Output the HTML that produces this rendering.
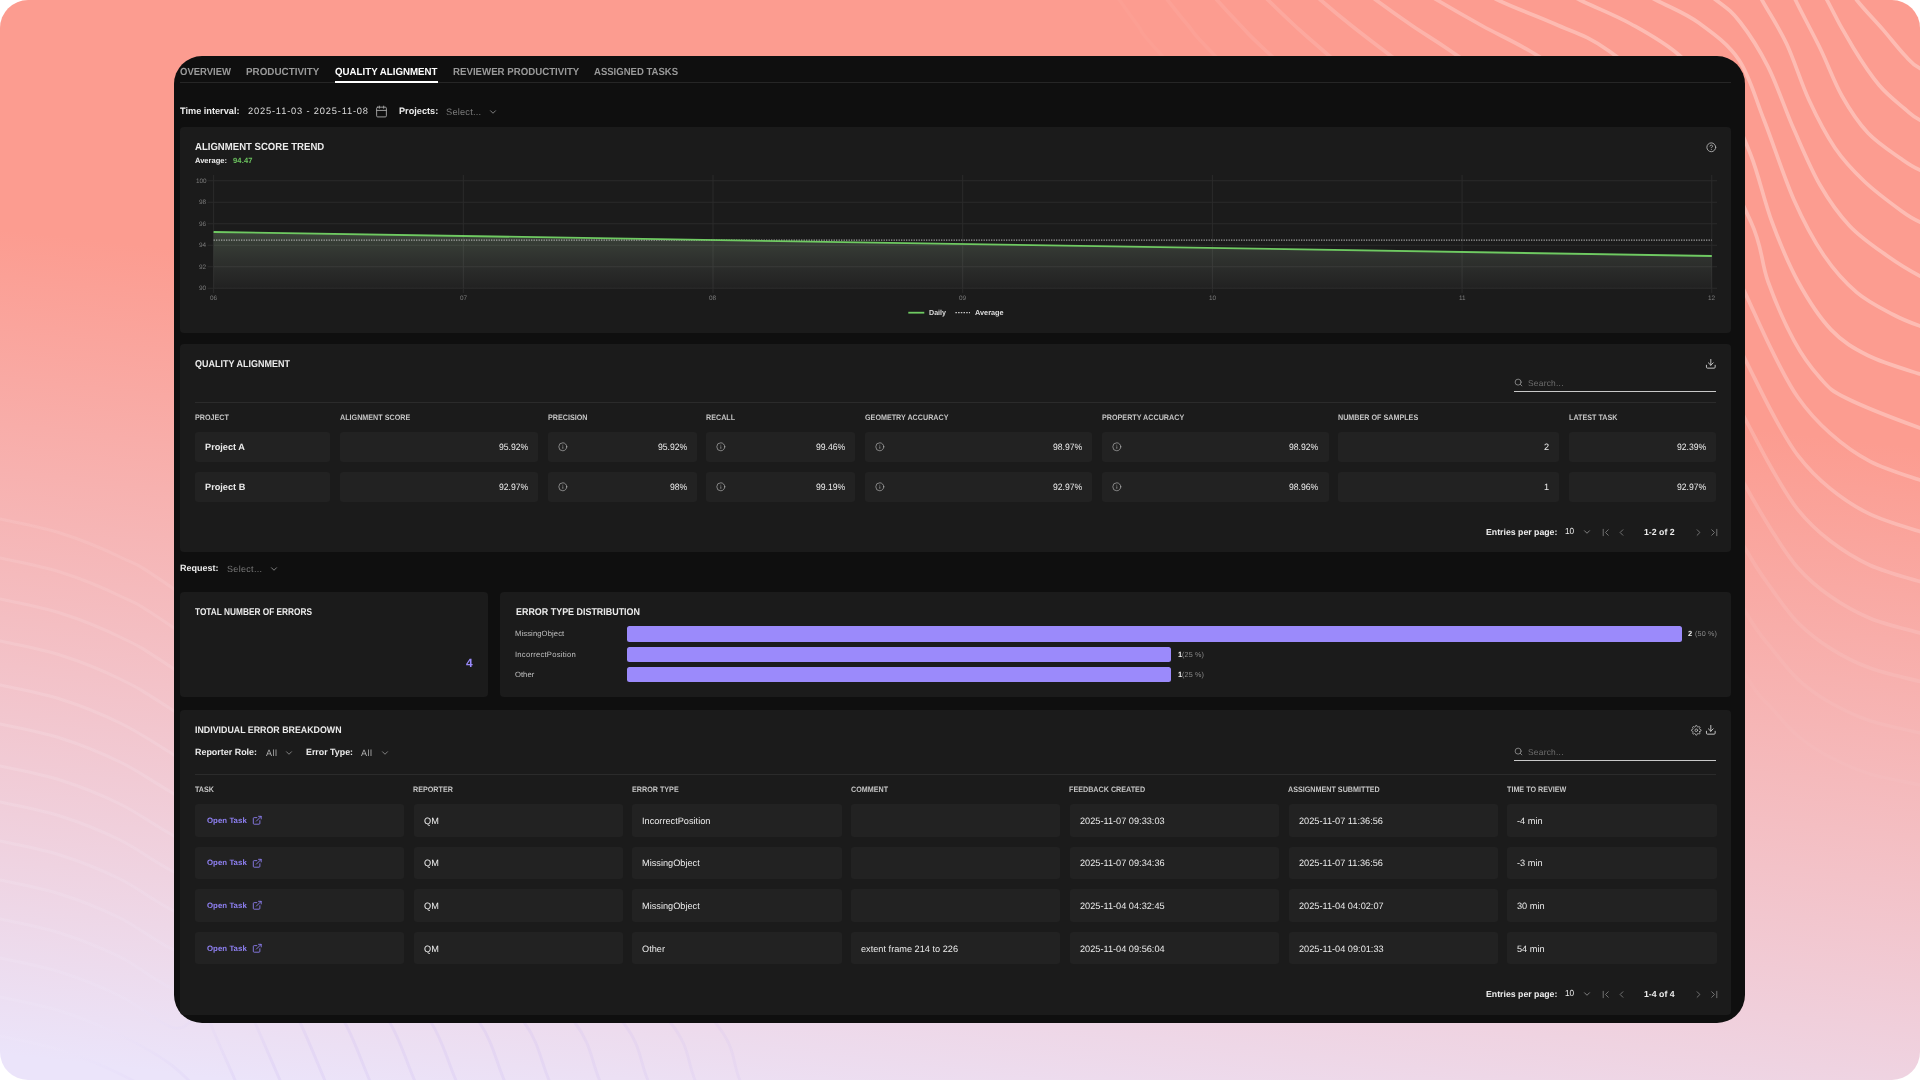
<!DOCTYPE html>
<html lang="en"><head><meta charset="utf-8"><title>Quality Alignment</title>
<style>
html,body{margin:0;padding:0;background:#fff;}
body{width:1920px;height:1080px;overflow:hidden;position:relative;font-family:"Liberation Sans", Arial, sans-serif;}
.r{position:absolute;}
.t{position:absolute;white-space:pre;line-height:20px;transform:skewX(0.06deg);transform-origin:0 50%;font-family:"Liberation Sans", Arial, sans-serif;}
svg{position:absolute;overflow:visible;}
#tx{position:absolute;left:0;top:0;width:1920px;height:1080px;will-change:transform;}

</style></head><body>
<div class="r" id="bg" style="left:0;top:0;width:1920px;height:1080px;border-radius:28px;overflow:hidden;background:linear-gradient(186.5deg,#fc9c90 34.5%,#ebe4fa 98%);">
<svg width="1920" height="1080" viewBox="0 0 1920 1080" style="left:0;top:0" fill="none" stroke="#ffffff" stroke-width="3.7">
<defs><linearGradient id="wl" gradientUnits="userSpaceOnUse" x1="0" y1="700" x2="250" y2="1080"><stop offset="0" stop-color="#ffffff" stop-opacity="0.6"/><stop offset="0.7" stop-color="#f0eafc" stop-opacity="0.6"/><stop offset="1" stop-color="#c9b6f1"/></linearGradient></defs><g><path d="M1836.0 -30.0C1839.5 -25.0 1848.9 -9.9 1856.7 0.0C1864.5 9.9 1875.0 20.4 1883.0 29.6C1891.0 38.9 1898.8 49.0 1905.0 55.5C1911.2 62.0 1912.5 64.4 1920.0 68.5C1927.5 72.6 1945.0 78.1 1950.0 80.0" stroke-opacity="0.32"/><path d="M1815.0 -30.0C1817.0 -25.0 1820.6 -13.0 1827.0 0.0C1833.4 13.0 1844.7 33.8 1853.4 48.0C1862.1 62.2 1870.4 74.8 1879.0 85.0C1887.6 95.2 1898.2 103.2 1905.0 109.0C1911.8 114.8 1912.5 116.5 1920.0 120.0C1927.5 123.5 1945.0 128.3 1950.0 130.0" stroke-opacity="0.32"/><path d="M1783.0 -30.0C1785.1 -25.0 1789.3 -13.0 1795.5 0.0C1801.7 13.0 1812.2 32.0 1820.0 48.0C1827.8 64.0 1834.0 81.8 1842.0 96.0C1850.0 110.2 1858.1 122.5 1868.0 133.0C1877.9 143.5 1892.8 152.8 1901.5 159.0C1910.2 165.2 1911.9 166.5 1920.0 170.0C1928.1 173.5 1945.0 178.3 1950.0 180.0" stroke-opacity="0.32"/><path d="M1745.0 -32.0C1747.8 -26.7 1755.0 -12.7 1762.0 0.0C1769.0 12.7 1778.9 27.3 1786.7 44.0C1794.5 60.7 1801.0 82.7 1809.0 100.0C1817.0 117.3 1825.8 134.4 1835.0 148.0C1844.2 161.6 1853.4 171.0 1864.5 181.5C1875.6 192.0 1892.2 204.2 1901.5 211.0C1910.8 217.8 1911.9 218.5 1920.0 222.0C1928.1 225.5 1945.0 230.3 1950.0 232.0" stroke-opacity="0.32"/><path d="M1670.0 -30.0C1677.7 -25.0 1704.3 -8.7 1716.0 0.0C1727.7 8.7 1731.3 10.9 1740.0 22.0C1748.7 33.1 1759.0 48.8 1768.0 66.7C1777.0 84.6 1785.3 109.9 1794.0 129.6C1802.7 149.3 1810.7 168.9 1820.0 185.0C1829.3 201.1 1838.6 214.2 1849.7 226.0C1860.8 237.8 1875.0 247.2 1886.7 255.5C1898.4 263.8 1909.5 270.6 1920.0 276.0C1930.5 281.4 1945.0 286.0 1950.0 288.0" stroke-opacity="0.32"/><path d="M1596.0 -30.0C1606.0 -25.0 1638.8 -8.8 1656.0 0.0C1673.2 8.8 1685.2 13.0 1699.0 23.0C1712.8 33.0 1728.2 43.8 1739.0 60.0C1749.8 76.2 1754.8 96.7 1764.0 120.0C1773.2 143.3 1784.0 177.4 1794.0 200.0C1804.0 222.6 1813.5 240.1 1824.0 255.5C1834.5 270.9 1845.3 282.7 1857.0 292.6C1868.7 302.5 1883.5 309.4 1894.0 315.0C1904.5 320.6 1910.7 322.7 1920.0 326.0C1929.3 329.3 1945.0 333.5 1950.0 335.0" stroke-opacity="0.32"/><path d="M1520.0 -30.0C1530.0 -25.0 1561.5 -9.0 1580.0 0.0C1598.5 9.0 1614.5 14.8 1631.0 24.0C1647.5 33.2 1663.2 41.5 1679.0 55.0C1694.8 68.5 1714.0 88.2 1726.0 105.0C1738.0 121.8 1743.3 136.0 1751.0 155.5C1758.7 175.0 1764.2 201.0 1772.0 222.0C1779.8 243.0 1788.2 263.6 1798.0 281.5C1807.8 299.4 1819.3 317.3 1831.0 329.6C1842.7 341.9 1853.2 348.1 1868.0 355.5C1882.8 362.9 1906.3 369.6 1920.0 374.0C1933.7 378.4 1945.0 380.7 1950.0 382.0" stroke-opacity="0.32"/><path d="M1440.0 -30.0C1450.0 -24.8 1480.8 -8.0 1500.0 1.0C1519.2 10.0 1536.8 15.7 1555.0 24.0C1573.2 32.3 1585.5 34.2 1609.0 51.0C1632.5 67.8 1672.3 96.5 1696.0 125.0C1719.7 153.5 1739.0 195.9 1751.0 222.0C1763.0 248.1 1760.8 261.7 1768.0 281.5C1775.2 301.3 1785.3 324.6 1794.0 340.7C1802.7 356.8 1811.3 368.2 1820.0 377.8C1828.7 387.4 1829.3 389.6 1846.0 398.0C1862.7 406.4 1902.7 421.7 1920.0 428.0C1937.3 434.3 1945.0 434.7 1950.0 436.0" stroke-opacity="0.3"/><path d="M1364.1 -44.0C1376.3 -36.7 1417.3 -11.7 1437.0 0.0C1456.7 11.7 1467.1 17.5 1482.5 26.0C1498.0 34.5 1512.8 40.9 1529.9 51.0C1547.0 61.1 1567.4 73.3 1585.0 86.3C1602.7 99.4 1619.9 113.9 1635.8 129.3C1651.7 144.7 1667.0 161.4 1680.6 178.7C1694.2 196.1 1706.8 214.6 1717.5 233.5C1728.3 252.5 1735.9 273.1 1745.0 292.6C1754.1 312.1 1763.2 333.2 1772.0 350.7C1780.8 368.2 1788.3 383.8 1798.0 397.5C1807.7 411.3 1818.0 422.5 1830.0 433.1C1842.0 443.8 1855.0 453.5 1870.0 461.3C1885.0 469.1 1906.7 475.5 1920.0 480.0C1933.3 484.5 1945.0 486.7 1950.0 488.0" stroke-opacity="0.27"/><path d="M1317.4 -44.0C1327.2 -36.7 1360.1 -11.7 1376.0 0.0C1391.9 11.7 1400.2 17.5 1412.6 26.0C1425.1 34.5 1432.5 38.5 1450.7 51.0C1468.9 63.5 1498.3 83.5 1521.7 101.0C1545.0 118.4 1568.9 136.4 1591.0 155.6C1613.0 174.8 1634.8 194.7 1654.2 216.0C1673.5 237.3 1691.9 259.6 1707.0 283.4C1722.1 307.2 1734.2 337.5 1745.0 359.0C1755.8 380.5 1763.2 396.4 1772.0 412.5C1780.8 428.6 1788.3 443.0 1798.0 455.6C1807.7 468.2 1818.0 478.6 1830.0 488.4C1842.0 498.1 1855.0 507.1 1870.0 514.2C1885.0 521.4 1906.7 527.3 1920.0 531.5C1933.3 535.7 1945.0 538.2 1950.0 539.5" stroke-opacity="0.24"/><path d="M1270.7 -44.0C1279.0 -36.7 1307.2 -11.7 1320.7 0.0C1334.2 11.7 1341.3 17.5 1352.0 26.0C1362.6 34.5 1365.1 36.2 1384.5 51.0C1403.8 65.8 1439.8 93.4 1467.8 114.9C1495.8 136.4 1525.1 157.7 1552.4 180.2C1579.6 202.8 1607.1 225.6 1631.3 250.3C1655.6 275.1 1678.9 300.6 1697.8 328.6C1716.8 356.7 1732.6 395.1 1745.0 418.5C1757.4 441.9 1763.2 453.8 1772.0 469.0C1780.8 484.2 1788.3 497.8 1798.0 509.8C1807.7 521.7 1818.0 531.5 1830.0 540.8C1842.0 550.0 1855.0 558.4 1870.0 565.2C1885.0 572.0 1906.7 577.5 1920.0 581.5C1933.3 585.5 1945.0 588.2 1950.0 589.5" stroke-opacity="0.18"/><path d="M1224.4 -44.0C1231.7 -36.7 1256.2 -11.7 1268.0 0.0C1279.8 11.7 1286.0 17.5 1295.2 26.0C1304.5 34.5 1303.1 33.6 1323.6 51.0C1344.0 68.4 1385.7 104.1 1417.8 130.3C1449.9 156.5 1484.2 181.6 1516.2 208.1C1548.2 234.7 1580.8 261.0 1609.6 289.6C1638.4 318.3 1666.4 347.6 1688.9 380.2C1711.5 412.7 1731.2 459.9 1745.0 485.0C1758.8 510.1 1763.2 517.1 1772.0 530.9C1780.8 544.7 1788.3 557.0 1798.0 567.9C1807.7 578.7 1818.0 587.6 1830.0 596.0C1842.0 604.4 1855.0 612.0 1870.0 618.2C1885.0 624.4 1906.7 629.2 1920.0 633.0C1933.3 636.8 1945.0 639.7 1950.0 641.0" stroke-opacity="0.13"/><path d="M1178.4 -44.0C1184.9 -36.7 1206.6 -11.7 1217.0 0.0C1227.4 11.7 1232.9 17.5 1241.1 26.0C1249.3 34.5 1244.7 31.1 1266.2 51.0C1287.6 70.9 1333.9 114.8 1369.7 145.5C1405.6 176.2 1444.6 204.9 1481.0 235.2C1517.5 265.5 1555.2 295.0 1588.5 327.4C1621.7 359.7 1654.2 392.4 1680.3 429.2C1706.4 466.0 1729.7 521.3 1745.0 548.0C1760.3 574.7 1763.2 576.9 1772.0 589.4C1780.8 601.8 1788.3 613.0 1798.0 622.8C1807.7 632.5 1818.0 640.6 1830.0 648.1C1842.0 655.7 1855.0 662.6 1870.0 668.1C1885.0 673.7 1906.7 677.9 1920.0 681.5C1933.3 685.1 1945.0 688.2 1950.0 689.5" stroke-opacity="0.09"/><path d="M1134.0 -44.0C1139.6 -36.7 1158.5 -11.7 1167.6 0.0C1176.7 11.7 1181.4 17.5 1188.6 26.0C1195.7 34.5 1188.3 28.4 1210.4 51.0C1232.5 73.6 1282.2 126.4 1321.2 161.9C1360.3 197.3 1404.0 229.6 1444.8 263.7C1485.7 297.7 1528.7 330.2 1566.5 366.0C1604.2 401.9 1641.7 437.8 1671.4 478.6C1701.2 519.4 1728.2 582.6 1745.0 611.0C1761.8 639.4 1763.2 637.4 1772.0 648.8C1780.8 660.2 1788.3 670.4 1798.0 679.3C1807.7 688.3 1818.0 695.6 1830.0 702.5C1842.0 709.4 1855.0 715.7 1870.0 720.8C1885.0 725.9 1906.7 729.6 1920.0 733.0C1933.3 736.4 1945.0 739.7 1950.0 741.0" stroke-opacity="0.055"/><path d="M1089.5 -44.0C1094.5 -36.7 1111.4 -11.7 1119.5 0.0C1127.6 11.7 1131.9 17.5 1138.2 26.0C1144.6 34.5 1134.9 25.7 1157.8 51.0C1180.6 76.3 1233.1 137.6 1275.2 177.7C1317.3 217.8 1365.3 253.9 1410.3 291.7C1455.4 329.5 1503.3 365.2 1545.4 404.6C1587.5 444.0 1629.6 483.2 1662.9 528.1C1696.1 573.0 1726.8 644.0 1745.0 674.0C1763.2 704.0 1763.2 698.0 1772.0 708.4C1780.8 718.8 1788.3 728.0 1798.0 736.2C1807.7 744.3 1818.0 751.0 1830.0 757.2C1842.0 763.5 1855.0 769.3 1870.0 773.9C1885.0 778.5 1906.7 781.8 1920.0 785.0C1933.3 788.2 1945.0 791.7 1950.0 793.0" stroke-opacity="0.03"/></g><g stroke-width="3" stroke="url(#wl)"><path d="M-40.0 511.0C-33.3 512.3 -16.7 515.3 0.0 519.0C16.7 522.7 40.0 526.7 60.0 533.0C80.0 539.3 101.0 547.7 120.0 557.0C139.0 566.3 127.3 556.8 174.0 589.0C220.7 621.2 328.4 695.6 400.3 750.2C472.3 804.8 553.4 871.4 605.9 916.7C658.3 962.0 692.5 994.8 714.8 1022.0C737.2 1049.2 731.5 1060.7 739.8 1080.0C748.2 1099.3 760.7 1128.3 764.8 1138.0" stroke-opacity="0.15"/><path d="M-40.0 550.0C-33.3 551.3 -16.7 554.3 0.0 558.0C16.7 561.7 40.0 565.7 60.0 572.0C80.0 578.3 101.0 586.7 120.0 596.0C139.0 605.3 130.3 598.4 174.0 628.0C217.7 657.6 316.3 724.0 382.4 773.6C448.5 823.2 522.9 883.9 570.9 925.3C618.8 966.7 649.3 996.2 670.0 1022.0C690.7 1047.8 686.7 1060.7 695.0 1080.0C703.3 1099.3 715.8 1128.3 720.0 1138.0" stroke-opacity="0.16"/><path d="M-40.0 591.0C-33.3 592.3 -16.7 595.3 0.0 599.0C16.7 602.7 40.0 606.7 60.0 613.0C80.0 619.3 101.0 627.7 120.0 637.0C139.0 646.3 133.4 642.1 174.0 669.0C214.6 695.9 303.5 754.0 363.5 798.2C423.6 842.4 490.9 897.0 534.1 934.3C577.3 971.6 603.9 997.7 622.8 1022.0C641.8 1046.3 639.5 1060.7 647.8 1080.0C656.2 1099.3 668.7 1128.3 672.8 1138.0" stroke-opacity="0.18"/><path d="M-40.0 633.0C-33.3 634.3 -16.7 637.3 0.0 641.0C16.7 644.7 40.0 648.7 60.0 655.0C80.0 661.3 101.0 669.7 120.0 679.0C139.0 688.3 136.6 686.9 174.0 711.0C211.4 735.1 290.5 784.6 344.2 823.4C398.0 862.2 458.0 910.5 496.4 943.6C534.8 976.7 557.4 999.3 574.5 1022.0C591.7 1044.7 591.2 1060.7 599.5 1080.0C607.9 1099.3 620.4 1128.3 624.5 1138.0" stroke-opacity="0.19"/><path d="M-40.0 677.0C-33.3 678.3 -16.7 681.3 0.0 685.0C16.7 688.7 40.0 692.7 60.0 699.0C80.0 705.3 101.0 713.7 120.0 723.0C139.0 732.3 140.0 733.9 174.0 755.0C208.0 776.1 276.8 816.8 324.0 849.8C371.1 882.8 423.6 924.6 457.0 953.3C490.3 982.0 508.6 1000.9 524.0 1022.0C539.3 1043.1 540.6 1060.7 549.0 1080.0C557.3 1099.3 569.8 1128.3 574.0 1138.0" stroke-opacity="0.21"/><path d="M-40.0 716.0C-33.3 717.3 -16.7 720.3 0.0 724.0C16.7 727.7 40.0 731.7 60.0 738.0C80.0 744.3 101.0 752.7 120.0 762.0C139.0 771.3 143.0 775.5 174.0 794.0C205.0 812.5 264.7 845.2 306.0 873.2C347.4 901.2 393.1 937.0 422.0 961.8C450.8 986.6 465.4 1002.3 479.1 1022.0C492.8 1041.7 495.8 1060.7 504.1 1080.0C512.4 1099.3 524.9 1128.3 529.1 1138.0" stroke-opacity="0.22"/><path d="M-40.0 758.0C-33.3 759.3 -16.7 762.3 0.0 766.0C16.7 769.7 40.0 773.7 60.0 780.0C80.0 786.3 101.0 794.7 120.0 804.0C139.0 813.3 146.2 820.3 174.0 836.0C201.8 851.7 251.7 875.9 286.7 898.4C321.8 920.9 360.3 950.5 384.3 971.1C408.3 991.7 418.9 1003.8 430.8 1022.0C442.7 1040.2 447.5 1060.7 455.8 1080.0C464.1 1099.3 476.6 1128.3 480.8 1138.0" stroke-opacity="0.22"/><path d="M-40.0 794.0C-33.3 795.3 -16.7 798.3 0.0 802.0C16.7 805.7 40.0 809.7 60.0 816.0C80.0 822.3 101.0 830.7 120.0 840.0C139.0 849.3 149.0 858.7 174.0 872.0C199.0 885.3 240.5 902.2 270.2 920.0C299.8 937.8 332.1 962.0 352.0 979.0C371.9 996.0 379.0 1005.2 389.4 1022.0C399.8 1038.8 406.1 1060.7 414.4 1080.0C422.7 1099.3 435.2 1128.3 439.4 1138.0" stroke-opacity="0.22"/><path d="M-40.0 833.0C-33.3 834.3 -16.7 837.3 0.0 841.0C16.7 844.7 40.0 848.7 60.0 855.0C80.0 861.3 101.0 869.7 120.0 879.0C139.0 888.3 152.0 900.3 174.0 911.0C196.0 921.7 228.4 930.6 252.2 943.4C276.1 956.2 301.6 974.5 317.0 987.6C332.4 1000.7 335.8 1006.6 344.5 1022.0C353.3 1037.4 361.2 1060.7 369.5 1080.0C377.9 1099.3 390.4 1128.3 394.5 1138.0" stroke-opacity="0.22"/><path d="M-40.0 872.0C-33.3 873.3 -16.7 876.3 0.0 880.0C16.7 883.7 40.0 887.7 60.0 894.0C80.0 900.3 101.0 908.7 120.0 918.0C139.0 927.3 155.0 941.9 174.0 950.0C193.0 958.1 216.3 959.1 234.3 966.8C252.3 974.5 271.1 987.0 282.0 996.2C292.9 1005.4 292.6 1008.0 299.7 1022.0C306.8 1036.0 316.4 1060.7 324.7 1080.0C333.0 1099.3 345.5 1128.3 349.7 1138.0" stroke-opacity="0.22"/><path d="M-40.0 911.0C-33.3 912.3 -16.7 915.3 0.0 919.0C16.7 922.7 40.0 926.7 60.0 933.0C80.0 939.3 101.0 947.7 120.0 957.0C139.0 966.3 157.9 983.5 174.0 989.0C190.1 994.5 204.2 987.6 216.3 990.2C228.5 992.8 240.6 999.4 247.1 1004.7C253.5 1010.0 249.4 1009.5 254.8 1022.0C260.3 1034.5 271.5 1060.7 279.9 1080.0C288.2 1099.3 300.7 1128.3 304.9 1138.0" stroke-opacity="0.22"/><path d="M-40.0 950.0C-33.3 951.3 -16.7 954.3 0.0 958.0C16.7 961.7 40.0 965.7 60.0 972.0C80.0 978.3 101.0 986.7 120.0 996.0C139.0 1005.3 160.9 1025.1 174.0 1028.0C187.1 1030.9 192.1 1016.0 198.4 1013.6C204.7 1011.2 210.1 1011.9 212.1 1013.3C214.0 1014.7 206.2 1010.9 210.0 1022.0C213.8 1033.1 226.7 1060.7 235.0 1080.0C243.3 1099.3 255.8 1128.3 260.0 1138.0" stroke-opacity="0.22"/><path d="M-40.0 989.0C-33.3 990.3 -16.7 993.3 0.0 997.0C16.7 1000.7 40.0 1004.7 60.0 1011.0C80.0 1017.3 101.0 1025.7 120.0 1035.0C139.0 1044.3 158.2 1054.2 174.0 1067.0C189.8 1079.8 202.3 1094.5 215.0 1112.0C227.7 1129.5 244.2 1162.0 250.0 1172.0" stroke-opacity="0.22"/><path d="M-40.0 1028.0C-33.3 1029.3 -16.7 1032.3 0.0 1036.0C16.7 1039.7 40.0 1043.7 60.0 1050.0C80.0 1056.3 101.0 1064.7 120.0 1074.0C139.0 1083.3 158.2 1093.2 174.0 1106.0C189.8 1118.8 202.3 1133.5 215.0 1151.0C227.7 1168.5 244.2 1201.0 250.0 1211.0" stroke-opacity="0.22"/></g>
</svg></div>
<div class="r" style="left:174px;top:56px;width:1571px;height:966.5px;background:#0f0f0f;border-radius:28px;"></div><div class="r" style="left:180px;top:82px;width:1551px;height:1px;background:#262626;border-radius:0px;"></div><div class="r" style="left:335px;top:81px;width:102.5px;height:2px;background:#ffffff;border-radius:0px;"></div><div class="r" style="left:180px;top:127px;width:1551px;height:206px;background:#1b1b1b;border-radius:4px;"></div><div class="r" style="left:180px;top:344px;width:1551px;height:207.5px;background:#1b1b1b;border-radius:4px;"></div><div class="r" style="left:1514px;top:391px;width:202px;height:1px;background:#c9c9c9;border-radius:0px;"></div><div class="r" style="left:195px;top:402px;width:1521px;height:1px;background:#2b2b2b;border-radius:0px;"></div><div class="r" style="left:195px;top:432px;width:135px;height:30px;background:#222222;border-radius:3px;"></div><div class="r" style="left:340px;top:432px;width:198px;height:30px;background:#222222;border-radius:3px;"></div><div class="r" style="left:548px;top:432px;width:149px;height:30px;background:#222222;border-radius:3px;"></div><div class="r" style="left:706px;top:432px;width:149px;height:30px;background:#222222;border-radius:3px;"></div><div class="r" style="left:865px;top:432px;width:227px;height:30px;background:#222222;border-radius:3px;"></div><div class="r" style="left:1102px;top:432px;width:226.5px;height:30px;background:#222222;border-radius:3px;"></div><div class="r" style="left:1338px;top:432px;width:221px;height:30px;background:#222222;border-radius:3px;"></div><div class="r" style="left:1569px;top:432px;width:147px;height:30px;background:#222222;border-radius:3px;"></div><div class="r" style="left:195px;top:472px;width:135px;height:30px;background:#222222;border-radius:3px;"></div><div class="r" style="left:340px;top:472px;width:198px;height:30px;background:#222222;border-radius:3px;"></div><div class="r" style="left:548px;top:472px;width:149px;height:30px;background:#222222;border-radius:3px;"></div><div class="r" style="left:706px;top:472px;width:149px;height:30px;background:#222222;border-radius:3px;"></div><div class="r" style="left:865px;top:472px;width:227px;height:30px;background:#222222;border-radius:3px;"></div><div class="r" style="left:1102px;top:472px;width:226.5px;height:30px;background:#222222;border-radius:3px;"></div><div class="r" style="left:1338px;top:472px;width:221px;height:30px;background:#222222;border-radius:3px;"></div><div class="r" style="left:1569px;top:472px;width:147px;height:30px;background:#222222;border-radius:3px;"></div><div class="r" style="left:180px;top:592px;width:308px;height:105px;background:#1b1b1b;border-radius:4px;"></div><div class="r" style="left:500px;top:592px;width:1231px;height:105px;background:#1b1b1b;border-radius:4px;"></div><div class="r" style="left:626.9px;top:626.0px;width:1054.6999999999998px;height:15.5px;background:#9b8afb;border-radius:2.5px;"></div><div class="r" style="left:626.9px;top:647.2px;width:544.1px;height:15.1px;background:#9b8afb;border-radius:2.5px;"></div><div class="r" style="left:626.9px;top:667.1px;width:544.1px;height:15.4px;background:#9b8afb;border-radius:2.5px;"></div><div class="r" style="left:180px;top:710px;width:1551px;height:305px;background:#1b1b1b;border-radius:4px;"></div><div class="r" style="left:1514px;top:760px;width:202px;height:1px;background:#c9c9c9;border-radius:0px;"></div><div class="r" style="left:195px;top:774.3px;width:1521px;height:1px;background:#2b2b2b;border-radius:0px;"></div><div class="r" style="left:195.0px;top:804.2px;width:209.4px;height:32.5px;background:#222222;border-radius:3px;"></div><div class="r" style="left:413.7px;top:804.2px;width:209.4px;height:32.5px;background:#222222;border-radius:3px;"></div><div class="r" style="left:632.4px;top:804.2px;width:209.4px;height:32.5px;background:#222222;border-radius:3px;"></div><div class="r" style="left:851.0999999999999px;top:804.2px;width:209.4px;height:32.5px;background:#222222;border-radius:3px;"></div><div class="r" style="left:1069.8px;top:804.2px;width:209.4px;height:32.5px;background:#222222;border-radius:3px;"></div><div class="r" style="left:1288.5px;top:804.2px;width:209.4px;height:32.5px;background:#222222;border-radius:3px;"></div><div class="r" style="left:1507.1999999999998px;top:804.2px;width:209.4px;height:32.5px;background:#222222;border-radius:3px;"></div><div class="r" style="left:195.0px;top:846.75px;width:209.4px;height:32.5px;background:#222222;border-radius:3px;"></div><div class="r" style="left:413.7px;top:846.75px;width:209.4px;height:32.5px;background:#222222;border-radius:3px;"></div><div class="r" style="left:632.4px;top:846.75px;width:209.4px;height:32.5px;background:#222222;border-radius:3px;"></div><div class="r" style="left:851.0999999999999px;top:846.75px;width:209.4px;height:32.5px;background:#222222;border-radius:3px;"></div><div class="r" style="left:1069.8px;top:846.75px;width:209.4px;height:32.5px;background:#222222;border-radius:3px;"></div><div class="r" style="left:1288.5px;top:846.75px;width:209.4px;height:32.5px;background:#222222;border-radius:3px;"></div><div class="r" style="left:1507.1999999999998px;top:846.75px;width:209.4px;height:32.5px;background:#222222;border-radius:3px;"></div><div class="r" style="left:195.0px;top:889.3000000000001px;width:209.4px;height:32.5px;background:#222222;border-radius:3px;"></div><div class="r" style="left:413.7px;top:889.3000000000001px;width:209.4px;height:32.5px;background:#222222;border-radius:3px;"></div><div class="r" style="left:632.4px;top:889.3000000000001px;width:209.4px;height:32.5px;background:#222222;border-radius:3px;"></div><div class="r" style="left:851.0999999999999px;top:889.3000000000001px;width:209.4px;height:32.5px;background:#222222;border-radius:3px;"></div><div class="r" style="left:1069.8px;top:889.3000000000001px;width:209.4px;height:32.5px;background:#222222;border-radius:3px;"></div><div class="r" style="left:1288.5px;top:889.3000000000001px;width:209.4px;height:32.5px;background:#222222;border-radius:3px;"></div><div class="r" style="left:1507.1999999999998px;top:889.3000000000001px;width:209.4px;height:32.5px;background:#222222;border-radius:3px;"></div><div class="r" style="left:195.0px;top:931.85px;width:209.4px;height:32.5px;background:#222222;border-radius:3px;"></div><div class="r" style="left:413.7px;top:931.85px;width:209.4px;height:32.5px;background:#222222;border-radius:3px;"></div><div class="r" style="left:632.4px;top:931.85px;width:209.4px;height:32.5px;background:#222222;border-radius:3px;"></div><div class="r" style="left:851.0999999999999px;top:931.85px;width:209.4px;height:32.5px;background:#222222;border-radius:3px;"></div><div class="r" style="left:1069.8px;top:931.85px;width:209.4px;height:32.5px;background:#222222;border-radius:3px;"></div><div class="r" style="left:1288.5px;top:931.85px;width:209.4px;height:32.5px;background:#222222;border-radius:3px;"></div><div class="r" style="left:1507.1999999999998px;top:931.85px;width:209.4px;height:32.5px;background:#222222;border-radius:3px;"></div>
<svg width="1920" height="1080" viewBox="0 0 1920 1080" style="left:0;top:0"><line x1="207.5" x2="1717" y1="180.75" y2="180.75" stroke="#2b2b2b" stroke-width="1"/><line x1="207.5" x2="1717" y1="202.25" y2="202.25" stroke="#2b2b2b" stroke-width="1"/><line x1="207.5" x2="1717" y1="223.75" y2="223.75" stroke="#2b2b2b" stroke-width="1"/><line x1="207.5" x2="1717" y1="245.25" y2="245.25" stroke="#2b2b2b" stroke-width="1"/><line x1="207.5" x2="1717" y1="266.75" y2="266.75" stroke="#2b2b2b" stroke-width="1"/><line x1="207.5" x2="1717" y1="288.25" y2="288.25" stroke="#2b2b2b" stroke-width="1"/><line x1="213.60" x2="213.60" y1="175" y2="293" stroke="#2b2b2b" stroke-width="1"/><line x1="463.30" x2="463.30" y1="175" y2="293" stroke="#2b2b2b" stroke-width="1"/><line x1="713.00" x2="713.00" y1="175" y2="293" stroke="#2b2b2b" stroke-width="1"/><line x1="962.70" x2="962.70" y1="175" y2="293" stroke="#2b2b2b" stroke-width="1"/><line x1="1212.40" x2="1212.40" y1="175" y2="293" stroke="#2b2b2b" stroke-width="1"/><line x1="1462.10" x2="1462.10" y1="175" y2="293" stroke="#2b2b2b" stroke-width="1"/><line x1="1711.80" x2="1711.80" y1="175" y2="293" stroke="#2b2b2b" stroke-width="1"/><defs><linearGradient id="gf" x1="0" y1="0" x2="0" y2="1"><stop offset="0" stop-color="#a8cfa0" stop-opacity="0.23"/><stop offset="0.5" stop-color="#b4c8b0" stop-opacity="0.125"/><stop offset="1" stop-color="#c8c8c8" stop-opacity="0.035"/></linearGradient></defs><path d="M213.6 232 L1711.8 256 L1711.8 288.25 L213.6 288.25 Z" fill="url(#gf)"/><line x1="213.6" x2="1711.8" y1="240.1" y2="240.1" stroke="#b0b0b0" stroke-width="1.3" stroke-dasharray="1.2 1.3"/><path d="M213.6 232 L1711.8 256" stroke="#6fca62" stroke-width="1.8" fill="none"/><line x1="908.3" x2="924.3" y1="312.7" y2="312.7" stroke="#6fca62" stroke-width="1.8"/><line x1="955.4" x2="970" y1="312.7" y2="312.7" stroke="#c8c8c8" stroke-width="1.3" stroke-dasharray="1.5 1.2"/></svg><svg style="left:374.8px;top:104.8px" width="13" height="13" viewBox="0 0 24 24" fill="none" stroke="#a8a8a8" stroke-width="1.7" stroke-linecap="round" stroke-linejoin="round"><rect x="3" y="4" width="18" height="18" rx="2"/><path d="M16 2v4M8 2v4M3 10h18"/></svg><svg style="left:488px;top:106.5px" width="10" height="10" viewBox="0 0 24 24" fill="none" stroke="#8a8a8a" stroke-width="2.2" stroke-linecap="round" stroke-linejoin="round"><path d="M6 9l6 6 6-6"/></svg><svg style="left:1706.1px;top:142px" width="10.6" height="10.6" viewBox="0 0 24 24" fill="none" stroke="#b4b4b4" stroke-width="2" stroke-linecap="round" stroke-linejoin="round"><circle cx="12" cy="12" r="10"/><path d="M9.09 9a3 3 0 0 1 5.83 1c0 2-3 3-3 3"/><path d="M12 17h.01"/></svg><svg style="left:1705.2px;top:358.2px" width="11.6" height="11.6" viewBox="0 0 24 24" fill="none" stroke="#c8c8c8" stroke-width="2" stroke-linecap="round" stroke-linejoin="round"><path d="M21 15v4a2 2 0 0 1-2 2H5a2 2 0 0 1-2-2v-4"/><path d="M7 10l5 5 5-5"/><path d="M12 15V3"/></svg><svg style="left:1514px;top:378px" width="9" height="9" viewBox="0 0 24 24" fill="none" stroke="#8a8a8a" stroke-width="2.4" stroke-linecap="round" stroke-linejoin="round"><circle cx="11" cy="11" r="8"/><path d="M21 21l-4.35-4.35"/></svg><svg style="left:557.5px;top:441.5px" width="9.6" height="9.6" viewBox="0 0 24 24" fill="none" stroke="#c4c4c4" stroke-width="1.5" stroke-linecap="round" stroke-linejoin="round"><circle cx="12" cy="12" r="10"/><path d="M12 16v-4"/><path d="M12 8h.01"/></svg><svg style="left:715.5px;top:441.5px" width="9.6" height="9.6" viewBox="0 0 24 24" fill="none" stroke="#c4c4c4" stroke-width="1.5" stroke-linecap="round" stroke-linejoin="round"><circle cx="12" cy="12" r="10"/><path d="M12 16v-4"/><path d="M12 8h.01"/></svg><svg style="left:874.5px;top:441.5px" width="9.6" height="9.6" viewBox="0 0 24 24" fill="none" stroke="#c4c4c4" stroke-width="1.5" stroke-linecap="round" stroke-linejoin="round"><circle cx="12" cy="12" r="10"/><path d="M12 16v-4"/><path d="M12 8h.01"/></svg><svg style="left:1111.5px;top:441.5px" width="9.6" height="9.6" viewBox="0 0 24 24" fill="none" stroke="#c4c4c4" stroke-width="1.5" stroke-linecap="round" stroke-linejoin="round"><circle cx="12" cy="12" r="10"/><path d="M12 16v-4"/><path d="M12 8h.01"/></svg><svg style="left:557.5px;top:481.5px" width="9.6" height="9.6" viewBox="0 0 24 24" fill="none" stroke="#c4c4c4" stroke-width="1.5" stroke-linecap="round" stroke-linejoin="round"><circle cx="12" cy="12" r="10"/><path d="M12 16v-4"/><path d="M12 8h.01"/></svg><svg style="left:715.5px;top:481.5px" width="9.6" height="9.6" viewBox="0 0 24 24" fill="none" stroke="#c4c4c4" stroke-width="1.5" stroke-linecap="round" stroke-linejoin="round"><circle cx="12" cy="12" r="10"/><path d="M12 16v-4"/><path d="M12 8h.01"/></svg><svg style="left:874.5px;top:481.5px" width="9.6" height="9.6" viewBox="0 0 24 24" fill="none" stroke="#c4c4c4" stroke-width="1.5" stroke-linecap="round" stroke-linejoin="round"><circle cx="12" cy="12" r="10"/><path d="M12 16v-4"/><path d="M12 8h.01"/></svg><svg style="left:1111.5px;top:481.5px" width="9.6" height="9.6" viewBox="0 0 24 24" fill="none" stroke="#c4c4c4" stroke-width="1.5" stroke-linecap="round" stroke-linejoin="round"><circle cx="12" cy="12" r="10"/><path d="M12 16v-4"/><path d="M12 8h.01"/></svg><svg style="left:1582.4px;top:527.4px" width="10" height="10" viewBox="0 0 24 24" fill="none" stroke="#8a8a8a" stroke-width="2.2" stroke-linecap="round" stroke-linejoin="round"><path d="M6 9l6 6 6-6"/></svg><svg style="left:1600px;top:526.9px" width="11" height="11" viewBox="0 0 24 24" fill="none" stroke="#7a7a7a" stroke-width="2" stroke-linecap="round" stroke-linejoin="round"><path d="M18 6l-6 6 6 6"/><path d="M7 5v14"/></svg><svg style="left:1615.5px;top:526.9px" width="11" height="11" viewBox="0 0 24 24" fill="none" stroke="#7a7a7a" stroke-width="2" stroke-linecap="round" stroke-linejoin="round"><path d="M15 6l-6 6 6 6"/></svg><svg style="left:1693px;top:526.9px" width="11" height="11" viewBox="0 0 24 24" fill="none" stroke="#7a7a7a" stroke-width="2" stroke-linecap="round" stroke-linejoin="round"><path d="M9 6l6 6-6 6"/></svg><svg style="left:1708.5px;top:526.9px" width="11" height="11" viewBox="0 0 24 24" fill="none" stroke="#7a7a7a" stroke-width="2" stroke-linecap="round" stroke-linejoin="round"><path d="M6 6l6 6-6 6"/><path d="M17 5v14"/></svg><svg style="left:269px;top:564px" width="10" height="10" viewBox="0 0 24 24" fill="none" stroke="#8a8a8a" stroke-width="2.2" stroke-linecap="round" stroke-linejoin="round"><path d="M6 9l6 6 6-6"/></svg><svg style="left:1690.8px;top:724.8px" width="10.6" height="10.6" viewBox="0 0 24 24" fill="none" stroke="#bdbdbd" stroke-width="1.9" stroke-linecap="round" stroke-linejoin="round"><circle cx="12" cy="12" r="3"/><path d="M19.4 15a1.65 1.65 0 0 0 .33 1.82l.06.06a2 2 0 0 1 0 2.83 2 2 0 0 1-2.83 0l-.06-.06a1.65 1.65 0 0 0-1.82-.33 1.65 1.65 0 0 0-1 1.51V21a2 2 0 0 1-2 2 2 2 0 0 1-2-2v-.09A1.65 1.65 0 0 0 9 19.4a1.65 1.65 0 0 0-1.82.33l-.06.06a2 2 0 0 1-2.83 0 2 2 0 0 1 0-2.83l.06-.06a1.65 1.65 0 0 0 .33-1.82 1.65 1.65 0 0 0-1.51-1H3a2 2 0 0 1-2-2 2 2 0 0 1 2-2h.09A1.65 1.65 0 0 0 4.6 9a1.65 1.65 0 0 0-.33-1.82l-.06-.06a2 2 0 0 1 0-2.83 2 2 0 0 1 2.83 0l.06.06a1.65 1.65 0 0 0 1.82.33H9a1.65 1.65 0 0 0 1-1.51V3a2 2 0 0 1 2-2 2 2 0 0 1 2 2v.09a1.65 1.65 0 0 0 1 1.51 1.65 1.65 0 0 0 1.82-.33l.06-.06a2 2 0 0 1 2.83 0 2 2 0 0 1 0 2.83l-.06.06a1.65 1.65 0 0 0-.33 1.82V9a1.65 1.65 0 0 0 1.51 1H21a2 2 0 0 1 2 2 2 2 0 0 1-2 2h-.09a1.65 1.65 0 0 0-1.51 1z"/></svg><svg style="left:1705.2px;top:724.2px" width="11.6" height="11.6" viewBox="0 0 24 24" fill="none" stroke="#c8c8c8" stroke-width="2" stroke-linecap="round" stroke-linejoin="round"><path d="M21 15v4a2 2 0 0 1-2 2H5a2 2 0 0 1-2-2v-4"/><path d="M7 10l5 5 5-5"/><path d="M12 15V3"/></svg><svg style="left:284px;top:748px" width="10" height="10" viewBox="0 0 24 24" fill="none" stroke="#8a8a8a" stroke-width="2.2" stroke-linecap="round" stroke-linejoin="round"><path d="M6 9l6 6 6-6"/></svg><svg style="left:380px;top:748px" width="10" height="10" viewBox="0 0 24 24" fill="none" stroke="#8a8a8a" stroke-width="2.2" stroke-linecap="round" stroke-linejoin="round"><path d="M6 9l6 6 6-6"/></svg><svg style="left:1514px;top:747px" width="9" height="9" viewBox="0 0 24 24" fill="none" stroke="#8a8a8a" stroke-width="2.4" stroke-linecap="round" stroke-linejoin="round"><circle cx="11" cy="11" r="8"/><path d="M21 21l-4.35-4.35"/></svg><svg style="left:252px;top:815.2px" width="10.5" height="10.5" viewBox="0 0 24 24" fill="none" stroke="#8f80f3" stroke-width="2" stroke-linecap="round" stroke-linejoin="round"><path d="M18 13v6a2 2 0 0 1-2 2H5a2 2 0 0 1-2-2V8a2 2 0 0 1 2-2h6"/><path d="M15 3h6v6"/><path d="M10 14L21 3"/></svg><svg style="left:252px;top:857.75px" width="10.5" height="10.5" viewBox="0 0 24 24" fill="none" stroke="#8f80f3" stroke-width="2" stroke-linecap="round" stroke-linejoin="round"><path d="M18 13v6a2 2 0 0 1-2 2H5a2 2 0 0 1-2-2V8a2 2 0 0 1 2-2h6"/><path d="M15 3h6v6"/><path d="M10 14L21 3"/></svg><svg style="left:252px;top:900.3000000000001px" width="10.5" height="10.5" viewBox="0 0 24 24" fill="none" stroke="#8f80f3" stroke-width="2" stroke-linecap="round" stroke-linejoin="round"><path d="M18 13v6a2 2 0 0 1-2 2H5a2 2 0 0 1-2-2V8a2 2 0 0 1 2-2h6"/><path d="M15 3h6v6"/><path d="M10 14L21 3"/></svg><svg style="left:252px;top:942.85px" width="10.5" height="10.5" viewBox="0 0 24 24" fill="none" stroke="#8f80f3" stroke-width="2" stroke-linecap="round" stroke-linejoin="round"><path d="M18 13v6a2 2 0 0 1-2 2H5a2 2 0 0 1-2-2V8a2 2 0 0 1 2-2h6"/><path d="M15 3h6v6"/><path d="M10 14L21 3"/></svg><svg style="left:1582.4px;top:989.4px" width="10" height="10" viewBox="0 0 24 24" fill="none" stroke="#8a8a8a" stroke-width="2.2" stroke-linecap="round" stroke-linejoin="round"><path d="M6 9l6 6 6-6"/></svg><svg style="left:1600px;top:988.9px" width="11" height="11" viewBox="0 0 24 24" fill="none" stroke="#7a7a7a" stroke-width="2" stroke-linecap="round" stroke-linejoin="round"><path d="M18 6l-6 6 6 6"/><path d="M7 5v14"/></svg><svg style="left:1615.5px;top:988.9px" width="11" height="11" viewBox="0 0 24 24" fill="none" stroke="#7a7a7a" stroke-width="2" stroke-linecap="round" stroke-linejoin="round"><path d="M15 6l-6 6 6 6"/></svg><svg style="left:1693px;top:988.9px" width="11" height="11" viewBox="0 0 24 24" fill="none" stroke="#7a7a7a" stroke-width="2" stroke-linecap="round" stroke-linejoin="round"><path d="M9 6l6 6-6 6"/></svg><svg style="left:1708.5px;top:988.9px" width="11" height="11" viewBox="0 0 24 24" fill="none" stroke="#7a7a7a" stroke-width="2" stroke-linecap="round" stroke-linejoin="round"><path d="M6 6l6 6-6 6"/><path d="M17 5v14"/></svg>
<div id="tx"><span class="t" style="left:180.00px;top:62px;font-size:10.3px;color:#9a9a9a;font-weight:700;transform:scaleX(0.9220) skewX(0.06deg);">OVERVIEW</span><span class="t" style="left:246.25px;top:62px;font-size:10.3px;color:#9a9a9a;font-weight:700;transform:scaleX(0.9554) skewX(0.06deg);">PRODUCTIVITY</span><span class="t" style="left:335.00px;top:62px;font-size:10.3px;color:#ffffff;font-weight:700;transform:scaleX(0.9431) skewX(0.06deg);">QUALITY ALIGNMENT</span><span class="t" style="left:452.50px;top:62px;font-size:10.3px;color:#9a9a9a;font-weight:700;transform:scaleX(0.9390) skewX(0.06deg);">REVIEWER PRODUCTIVITY</span><span class="t" style="left:594.00px;top:62px;font-size:10.3px;color:#9a9a9a;font-weight:700;transform:scaleX(0.9253) skewX(0.06deg);">ASSIGNED TASKS</span><span class="t" style="left:180.00px;top:101px;font-size:9.3px;color:#ececec;font-weight:700;transform:scaleX(0.9870) skewX(0.06deg);">Time interval:</span><span class="t" style="left:248.00px;top:101px;font-size:9.3px;color:#dcdcdc;letter-spacing:0.818px;">2025-11-03 - 2025-11-08</span><span class="t" style="left:398.75px;top:101px;font-size:9.3px;color:#ececec;font-weight:700;transform:scaleX(0.9863) skewX(0.06deg);">Projects:</span><span class="t" style="left:445.75px;top:102px;font-size:9.3px;color:#7a7a7a;letter-spacing:0.176px;">Select...</span><span class="t" style="left:195.00px;top:137px;font-size:10.3px;color:#ececec;font-weight:700;transform:scaleX(0.9298) skewX(0.06deg);">ALIGNMENT SCORE TREND</span><span class="t" style="left:195.00px;top:151px;font-size:7.6px;color:#ececec;font-weight:700;transform:scaleX(0.9932) skewX(0.06deg);">Average:</span><span class="t" style="left:232.50px;top:151px;font-size:7.6px;color:#6cc35f;font-weight:700;letter-spacing:0.121px;">94.47</span><span class="t" style="left:195.83px;top:171px;font-size:6.4px;color:#7d7d7d;">100</span><span class="t" style="left:199.39px;top:192px;font-size:6.4px;color:#7d7d7d;">98</span><span class="t" style="left:199.39px;top:214px;font-size:6.4px;color:#7d7d7d;">96</span><span class="t" style="left:199.39px;top:235px;font-size:6.4px;color:#7d7d7d;">94</span><span class="t" style="left:199.39px;top:257px;font-size:6.4px;color:#7d7d7d;">92</span><span class="t" style="left:199.39px;top:278px;font-size:6.4px;color:#7d7d7d;">90</span><span class="t" style="left:210.05px;top:288px;font-size:6.4px;color:#7d7d7d;">06</span><span class="t" style="left:459.75px;top:288px;font-size:6.4px;color:#7d7d7d;">07</span><span class="t" style="left:709.45px;top:288px;font-size:6.4px;color:#7d7d7d;">08</span><span class="t" style="left:959.15px;top:288px;font-size:6.4px;color:#7d7d7d;">09</span><span class="t" style="left:1208.85px;top:288px;font-size:6.4px;color:#7d7d7d;">10</span><span class="t" style="left:1458.78px;top:288px;font-size:6.4px;color:#7d7d7d;">11</span><span class="t" style="left:1708.25px;top:288px;font-size:6.4px;color:#7d7d7d;">12</span><span class="t" style="left:929.20px;top:303px;font-size:7.4px;color:#dddddd;font-weight:700;transform:scaleX(0.9620) skewX(0.06deg);">Daily</span><span class="t" style="left:974.60px;top:303px;font-size:7.4px;color:#dddddd;font-weight:700;transform:scaleX(0.9894) skewX(0.06deg);">Average</span><span class="t" style="left:195.00px;top:354px;font-size:10.0px;color:#ececec;font-weight:700;transform:scaleX(0.8999) skewX(0.06deg);">QUALITY ALIGNMENT</span><span class="t" style="left:1527.60px;top:373px;font-size:8.4px;color:#6e6e6e;letter-spacing:0.246px;">Search...</span><span class="t" style="left:194.50px;top:408px;font-size:7.9px;color:#c4c4c4;font-weight:700;transform:scaleX(0.9100) skewX(0.06deg);">PROJECT</span><span class="t" style="left:339.50px;top:408px;font-size:7.9px;color:#c4c4c4;font-weight:700;transform:scaleX(0.9100) skewX(0.06deg);">ALIGNMENT SCORE</span><span class="t" style="left:547.50px;top:408px;font-size:7.9px;color:#c4c4c4;font-weight:700;transform:scaleX(0.9100) skewX(0.06deg);">PRECISION</span><span class="t" style="left:705.50px;top:408px;font-size:7.9px;color:#c4c4c4;font-weight:700;transform:scaleX(0.9100) skewX(0.06deg);">RECALL</span><span class="t" style="left:864.50px;top:408px;font-size:7.9px;color:#c4c4c4;font-weight:700;transform:scaleX(0.9100) skewX(0.06deg);">GEOMETRY ACCURACY</span><span class="t" style="left:1101.50px;top:408px;font-size:7.9px;color:#c4c4c4;font-weight:700;transform:scaleX(0.9100) skewX(0.06deg);">PROPERTY ACCURACY</span><span class="t" style="left:1337.50px;top:408px;font-size:7.9px;color:#c4c4c4;font-weight:700;transform:scaleX(0.9100) skewX(0.06deg);">NUMBER OF SAMPLES</span><span class="t" style="left:1568.50px;top:408px;font-size:7.9px;color:#c4c4c4;font-weight:700;transform:scaleX(0.9100) skewX(0.06deg);">LATEST TASK</span><span class="t" style="left:205.00px;top:437px;font-size:9.2px;color:#ececec;font-weight:700;">Project A</span><span class="t" style="left:498.70px;top:437px;font-size:9.2px;color:#ececec;transform:scaleX(0.9400) skewX(0.06deg);">95.92%</span><span class="t" style="left:657.70px;top:437px;font-size:9.2px;color:#ececec;transform:scaleX(0.9400) skewX(0.06deg);">95.92%</span><span class="t" style="left:815.70px;top:437px;font-size:9.2px;color:#ececec;transform:scaleX(0.9400) skewX(0.06deg);">99.46%</span><span class="t" style="left:1052.70px;top:437px;font-size:9.2px;color:#ececec;transform:scaleX(0.9400) skewX(0.06deg);">98.97%</span><span class="t" style="left:1289.20px;top:437px;font-size:9.2px;color:#ececec;transform:scaleX(0.9400) skewX(0.06deg);">98.92%</span><span class="t" style="left:1543.88px;top:437px;font-size:9.2px;color:#ececec;">2</span><span class="t" style="left:1676.70px;top:437px;font-size:9.2px;color:#ececec;transform:scaleX(0.9400) skewX(0.06deg);">92.39%</span><span class="t" style="left:205.00px;top:477px;font-size:9.2px;color:#ececec;font-weight:700;">Project B</span><span class="t" style="left:498.70px;top:477px;font-size:9.2px;color:#ececec;transform:scaleX(0.9400) skewX(0.06deg);">92.97%</span><span class="t" style="left:669.71px;top:477px;font-size:9.2px;color:#ececec;transform:scaleX(0.9400) skewX(0.06deg);">98%</span><span class="t" style="left:815.70px;top:477px;font-size:9.2px;color:#ececec;transform:scaleX(0.9400) skewX(0.06deg);">99.19%</span><span class="t" style="left:1052.70px;top:477px;font-size:9.2px;color:#ececec;transform:scaleX(0.9400) skewX(0.06deg);">92.97%</span><span class="t" style="left:1289.20px;top:477px;font-size:9.2px;color:#ececec;transform:scaleX(0.9400) skewX(0.06deg);">98.96%</span><span class="t" style="left:1543.88px;top:477px;font-size:9.2px;color:#ececec;">1</span><span class="t" style="left:1676.70px;top:477px;font-size:9.2px;color:#ececec;transform:scaleX(0.9400) skewX(0.06deg);">92.97%</span><span class="t" style="left:1485.60px;top:522px;font-size:8.8px;color:#ececec;font-weight:700;transform:scaleX(0.9934) skewX(0.06deg);">Entries per page:</span><span class="t" style="left:1565.40px;top:521px;font-size:8.8px;color:#ececec;transform:scaleX(0.9391) skewX(0.06deg);">10</span><span class="t" style="left:1644.40px;top:522px;font-size:8.8px;color:#ececec;font-weight:700;transform:scaleX(0.9931) skewX(0.06deg);">1-2 of 2</span><span class="t" style="left:180.00px;top:558px;font-size:9.0px;color:#ececec;font-weight:700;transform:scaleX(0.9996) skewX(0.06deg);">Request:</span><span class="t" style="left:226.50px;top:559px;font-size:9.0px;color:#7a7a7a;letter-spacing:0.311px;">Select...</span><span class="t" style="left:195.00px;top:602px;font-size:9.8px;color:#ececec;font-weight:700;transform:scaleX(0.8463) skewX(0.06deg);">TOTAL NUMBER OF ERRORS</span><span class="t" style="left:465.61px;top:653px;font-size:12.0px;color:#9989fa;font-weight:700;">4</span><span class="t" style="left:515.50px;top:602px;font-size:9.8px;color:#ececec;font-weight:700;transform:scaleX(0.9112) skewX(0.06deg);">ERROR TYPE DISTRIBUTION</span><span class="t" style="left:515.40px;top:624px;font-size:7.7px;color:#c0c0c0;letter-spacing:0.080px;">MissingObject</span><span class="t" style="left:1688.10px;top:624px;font-size:7.5px;color:#ececec;font-weight:700;">2</span><span class="t" style="left:1694.50px;top:624px;font-size:7.2px;color:#8a8a8a;letter-spacing:0.169px;">(50 %)</span><span class="t" style="left:515.40px;top:645px;font-size:7.7px;color:#c0c0c0;letter-spacing:0.215px;">IncorrectPosition</span><span class="t" style="left:1177.50px;top:645px;font-size:7.5px;color:#ececec;font-weight:700;">1</span><span class="t" style="left:1182.40px;top:645px;font-size:7.2px;color:#8a8a8a;letter-spacing:0.169px;">(25 %)</span><span class="t" style="left:515.40px;top:665px;font-size:7.7px;color:#c0c0c0;">Other</span><span class="t" style="left:1177.50px;top:665px;font-size:7.5px;color:#ececec;font-weight:700;">1</span><span class="t" style="left:1182.40px;top:665px;font-size:7.2px;color:#8a8a8a;letter-spacing:0.169px;">(25 %)</span><span class="t" style="left:195.00px;top:720px;font-size:9.6px;color:#ececec;font-weight:700;transform:scaleX(0.9203) skewX(0.06deg);">INDIVIDUAL ERROR BREAKDOWN</span><span class="t" style="left:195.00px;top:742px;font-size:9.0px;color:#ececec;font-weight:700;transform:scaleX(0.9918) skewX(0.06deg);">Reporter Role:</span><span class="t" style="left:265.50px;top:743px;font-size:9.0px;color:#b0b0b0;letter-spacing:0.492px;">All</span><span class="t" style="left:306.00px;top:742px;font-size:9.0px;color:#ececec;font-weight:700;transform:scaleX(0.9824) skewX(0.06deg);">Error Type:</span><span class="t" style="left:361.00px;top:743px;font-size:9.0px;color:#b0b0b0;letter-spacing:0.492px;">All</span><span class="t" style="left:1527.60px;top:742px;font-size:8.4px;color:#6e6e6e;letter-spacing:0.246px;">Search...</span><span class="t" style="left:194.50px;top:780px;font-size:7.9px;color:#c4c4c4;font-weight:700;transform:scaleX(0.9100) skewX(0.06deg);">TASK</span><span class="t" style="left:413.20px;top:780px;font-size:7.9px;color:#c4c4c4;font-weight:700;transform:scaleX(0.9100) skewX(0.06deg);">REPORTER</span><span class="t" style="left:631.90px;top:780px;font-size:7.9px;color:#c4c4c4;font-weight:700;transform:scaleX(0.9100) skewX(0.06deg);">ERROR TYPE</span><span class="t" style="left:850.60px;top:780px;font-size:7.9px;color:#c4c4c4;font-weight:700;transform:scaleX(0.9100) skewX(0.06deg);">COMMENT</span><span class="t" style="left:1069.30px;top:780px;font-size:7.9px;color:#c4c4c4;font-weight:700;transform:scaleX(0.9100) skewX(0.06deg);">FEEDBACK CREATED</span><span class="t" style="left:1288.00px;top:780px;font-size:7.9px;color:#c4c4c4;font-weight:700;transform:scaleX(0.9100) skewX(0.06deg);">ASSIGNMENT SUBMITTED</span><span class="t" style="left:1506.70px;top:780px;font-size:7.9px;color:#c4c4c4;font-weight:700;transform:scaleX(0.9100) skewX(0.06deg);">TIME TO REVIEW</span><span class="t" style="left:207.00px;top:811px;font-size:7.8px;color:#8f80f3;font-weight:700;letter-spacing:0.057px;">Open Task</span><span class="t" style="left:423.70px;top:811px;font-size:9.2px;color:#ececec;">QM</span><span class="t" style="left:642.40px;top:811px;font-size:9.2px;color:#ececec;">IncorrectPosition</span><span class="t" style="left:1079.80px;top:811px;font-size:9.2px;color:#ececec;">2025-11-07 09:33:03</span><span class="t" style="left:1298.50px;top:811px;font-size:9.2px;color:#ececec;">2025-11-07 11:36:56</span><span class="t" style="left:1517.20px;top:811px;font-size:9.2px;color:#ececec;">-4 min</span><span class="t" style="left:207.00px;top:853px;font-size:7.8px;color:#8f80f3;font-weight:700;letter-spacing:0.057px;">Open Task</span><span class="t" style="left:423.70px;top:853px;font-size:9.2px;color:#ececec;">QM</span><span class="t" style="left:642.40px;top:853px;font-size:9.2px;color:#ececec;">MissingObject</span><span class="t" style="left:1079.80px;top:853px;font-size:9.2px;color:#ececec;">2025-11-07 09:34:36</span><span class="t" style="left:1298.50px;top:853px;font-size:9.2px;color:#ececec;">2025-11-07 11:36:56</span><span class="t" style="left:1517.20px;top:853px;font-size:9.2px;color:#ececec;">-3 min</span><span class="t" style="left:207.00px;top:896px;font-size:7.8px;color:#8f80f3;font-weight:700;letter-spacing:0.057px;">Open Task</span><span class="t" style="left:423.70px;top:896px;font-size:9.2px;color:#ececec;">QM</span><span class="t" style="left:642.40px;top:896px;font-size:9.2px;color:#ececec;">MissingObject</span><span class="t" style="left:1079.80px;top:896px;font-size:9.2px;color:#ececec;">2025-11-04 04:32:45</span><span class="t" style="left:1298.50px;top:896px;font-size:9.2px;color:#ececec;">2025-11-04 04:02:07</span><span class="t" style="left:1517.20px;top:896px;font-size:9.2px;color:#ececec;">30 min</span><span class="t" style="left:207.00px;top:939px;font-size:7.8px;color:#8f80f3;font-weight:700;letter-spacing:0.057px;">Open Task</span><span class="t" style="left:423.70px;top:939px;font-size:9.2px;color:#ececec;">QM</span><span class="t" style="left:642.40px;top:939px;font-size:9.2px;color:#ececec;">Other</span><span class="t" style="left:861.10px;top:939px;font-size:9.2px;color:#ececec;">extent frame 214 to 226</span><span class="t" style="left:1079.80px;top:939px;font-size:9.2px;color:#ececec;">2025-11-04 09:56:04</span><span class="t" style="left:1298.50px;top:939px;font-size:9.2px;color:#ececec;">2025-11-04 09:01:33</span><span class="t" style="left:1517.20px;top:939px;font-size:9.2px;color:#ececec;">54 min</span><span class="t" style="left:1485.60px;top:984px;font-size:8.8px;color:#ececec;font-weight:700;transform:scaleX(0.9934) skewX(0.06deg);">Entries per page:</span><span class="t" style="left:1565.40px;top:983px;font-size:8.8px;color:#ececec;transform:scaleX(0.9391) skewX(0.06deg);">10</span><span class="t" style="left:1644.40px;top:984px;font-size:8.8px;color:#ececec;font-weight:700;transform:scaleX(0.9931) skewX(0.06deg);">1-4 of 4</span></div>
</body></html>
